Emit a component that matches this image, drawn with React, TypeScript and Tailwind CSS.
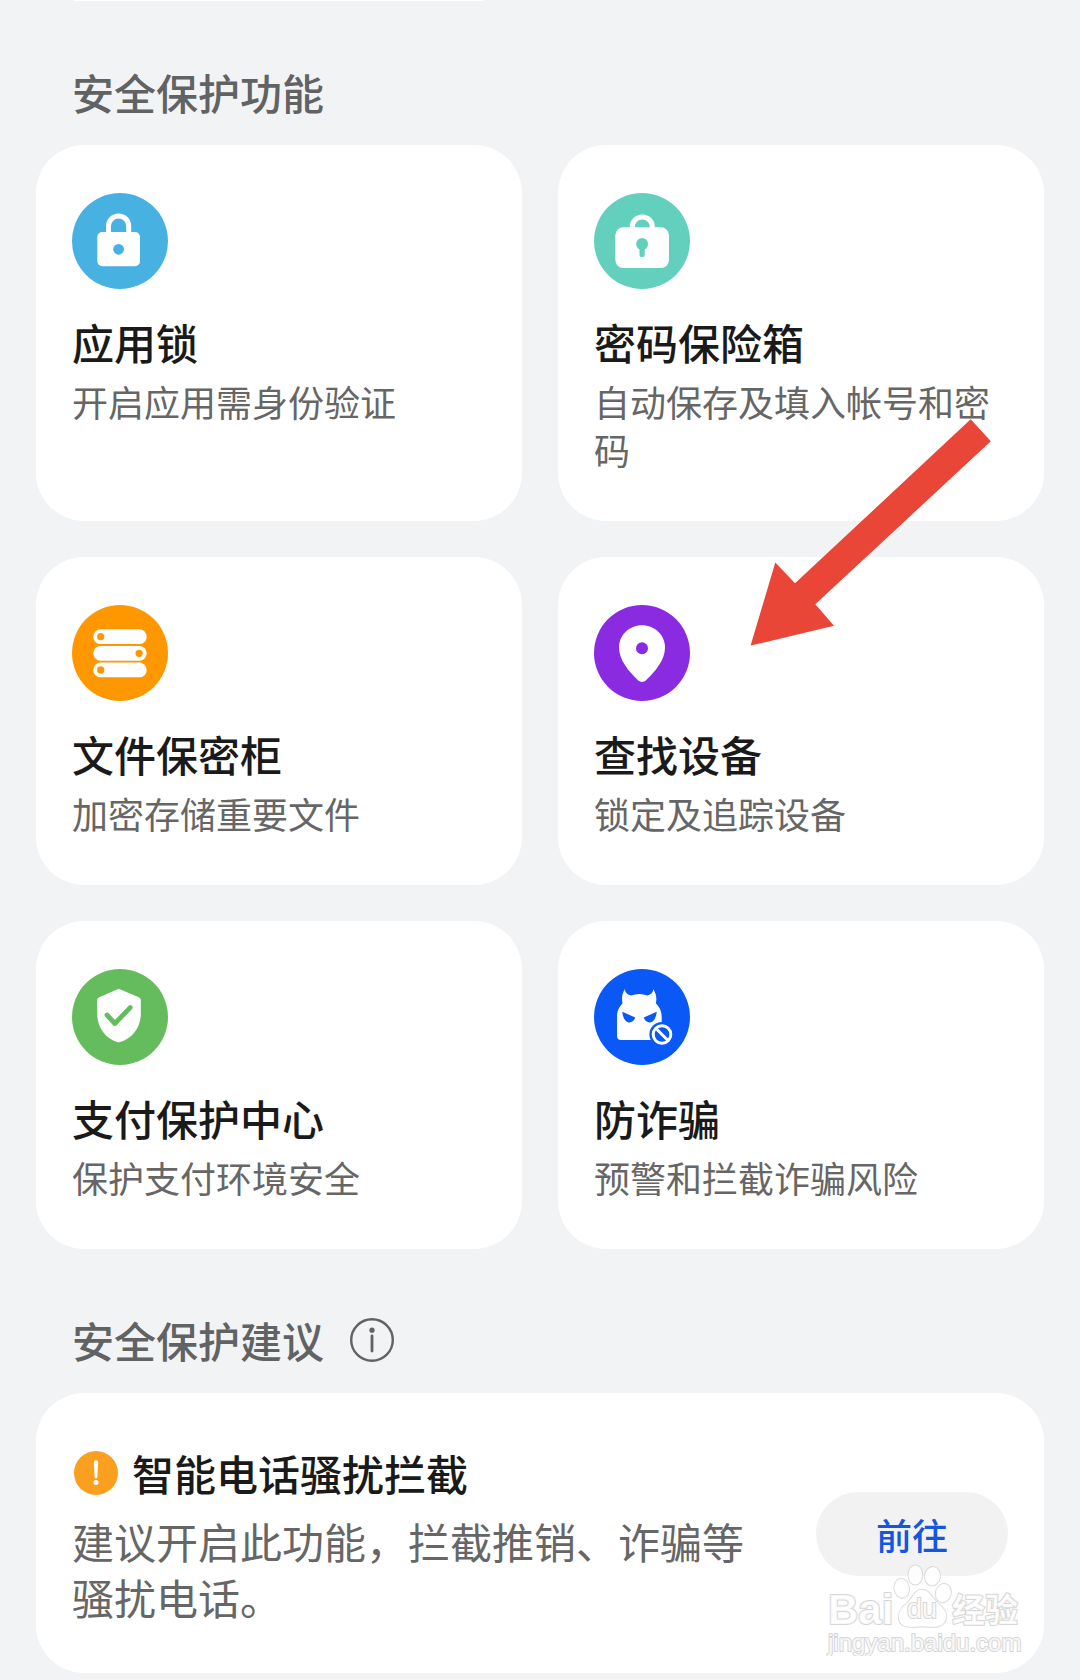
import type { ReactNode } from 'react';

type Feature = {
  title: string;
  desc: string;
  icon: ReactNode;
};

const features: Feature[] = [
  {
    title: '应用锁',
    desc: '开启应用需身份验证',
    icon: (
      <>
        <circle cx="48" cy="48" r="48" fill="#47b1e2" />
        <path d="M36.5 41V33a10.1 10.1 0 0 1 20.2 0V41" fill="none" stroke="#fff" strokeWidth="5" />
        <rect x="25.3" y="39" width="42.7" height="34.3" rx="5" fill="#fff" />
        <circle cx="46.6" cy="56.3" r="5.4" fill="#47b1e2" />
      </>
    ),
  },
  {
    title: '密码保险箱',
    desc: '自动保存及填入帐号和密码',
    icon: (
      <>
        <circle cx="48" cy="48" r="48" fill="#63d0bd" />
        <path d="M38.2 36V34a10.1 10.1 0 0 1 20.2 0V36" fill="none" stroke="#fff" strokeWidth="5" />
        <rect x="21.3" y="34.3" width="53.7" height="40.7" rx="8" fill="#fff" />
        <circle cx="48.1" cy="51" r="6" fill="#63d0bd" />
        <path d="M48.1 51V61.5" stroke="#63d0bd" strokeWidth="5.2" strokeLinecap="round" />
      </>
    ),
  },
  {
    title: '文件保密柜',
    desc: '加密存储重要文件',
    icon: (
      <>
        <circle cx="48" cy="48" r="48" fill="#ff9800" />
        <rect x="21.3" y="24.3" width="53.4" height="14.8" rx="7.4" fill="#fff" />
        <rect x="21.3" y="40.9" width="53.4" height="14.8" rx="7.4" fill="#fff" />
        <rect x="21.3" y="57.5" width="53.4" height="14.8" rx="7.4" fill="#fff" />
        <circle cx="28.7" cy="31.7" r="3.6" fill="#ff9800" />
        <circle cx="67.1" cy="48.3" r="3.6" fill="#ff9800" />
        <circle cx="28.7" cy="64.9" r="3.6" fill="#ff9800" />
      </>
    ),
  },
  {
    title: '查找设备',
    desc: '锁定及追踪设备',
    icon: (
      <>
        <circle cx="48" cy="48" r="48" fill="#8a2be2" />
        <path
          d="M48 20.3C60.7 20.3 71 30 71 42.5C71 55 61.5 66 52 75.3Q48 78.6 44 75.3C34.5 66 25 55 25 42.5C25 30 35.3 20.3 48 20.3Z"
          fill="#fff"
        />
        <circle cx="48" cy="43.3" r="6" fill="#8a2be2" />
      </>
    ),
  },
  {
    title: '支付保护中心',
    desc: '保护支付环境安全',
    icon: (
      <>
        <circle cx="48" cy="48" r="48" fill="#65bc5c" />
        <path
          d="M45 20.5Q46.8 19.6 48.6 20.5L67.3 28.6Q68.8 29.3 68.8 31V45C68.8 58.5 60 69.5 48.4 73Q46.8 73.5 45.2 73C33.8 69.5 25.2 58.5 25.2 45V31Q25.2 29.3 26.7 28.6Z"
          fill="#fff"
        />
        <path
          d="M35 46L42.9 54.5L58.2 38.6"
          fill="none"
          stroke="#65bc5c"
          strokeWidth="4.8"
          strokeLinecap="round"
          strokeLinejoin="round"
        />
      </>
    ),
  },
  {
    title: '防诈骗',
    desc: '预警和拦截诈骗风险',
    icon: (
      <>
        <circle cx="48" cy="48" r="48" fill="#0a59f7" />
        <path
          d="M30.7 20.3C31.5 24 33.5 26 37 26.6Q45.3 23.6 53.4 26.6C56.8 26 58.6 24 59.4 20.3C62.3 25 63 30 61.8 34.2C65.5 38 67.7 42 67.7 48V71H27Q23 71 23 67V48C23 42 25 38 28.6 34.2C27.4 30 28 25 30.7 20.3Z"
          fill="#fff"
        />
        <path d="M28.3 42.7L41.3 48.6C39 55.8 29.5 56 28.3 42.7Z" fill="#0a59f7" />
        <path d="M62.7 42.7L49.7 48.6C52 55.8 61.5 56 62.7 42.7Z" fill="#0a59f7" />
        <circle cx="68" cy="65.5" r="12.6" fill="#0a59f7" />
        <circle cx="68" cy="65.5" r="8.8" fill="none" stroke="#fff" strokeWidth="3" />
        <path d="M62 59.5L74 71.5" stroke="#fff" strokeWidth="3" />
      </>
    ),
  },
];

function FeatureCard({ title, desc, icon }: Feature) {
  return (
    <a href="#" className="block rounded-[48px] bg-white px-9 py-12">
      <svg viewBox="0 0 96 96" className="size-24" aria-hidden="true">
        {icon}
      </svg>
      <h3 className="mt-[23px] text-[42px] leading-[60px] font-medium text-[#1a1a1a]">{title}</h3>
      <p className="mt-[5px] text-[36px] leading-[48px] text-[#666666]">{desc}</p>
    </a>
  );
}

function Arrow() {
  return (
    <svg
      viewBox="0 0 241 227"
      className="pointer-events-none absolute top-[274px] right-[53px] h-[227px] w-[241px]"
      aria-hidden="true"
    >
      <path d="M0.6 226.6L25.3 143.6L45 164.3L220.7 0.3L240.8 22.3L65.3 185.3L84 206.7Z" fill="#e94637" />
    </svg>
  );
}

function Watermark() {
  return (
    <svg
      viewBox="-4 0 204 100"
      className="pointer-events-none absolute right-[52px] bottom-6 h-[100px] w-[204px]"
      fill="#fff"
      fillOpacity="0.85"
      stroke="#d6d6d6"
      strokeWidth="2"
      strokeLinejoin="round"
      paintOrder="stroke"
    >
      <g strokeWidth="1.6">
        <ellipse cx="73.7" cy="32.3" rx="7.4" ry="9.6" transform="rotate(-8 73.7 32.3)" />
        <ellipse cx="87.3" cy="19" rx="7" ry="9.8" />
        <ellipse cx="104.5" cy="20.2" rx="7.6" ry="9.4" transform="rotate(8 104 20)" />
        <ellipse cx="115.3" cy="37" rx="7.6" ry="9.4" transform="rotate(14 115 37)" />
        <path d="M94 33.5C102 34 104 42 110 47C116 52 120 57 118 63C115 73 105 71 94 70.5C84 71 74 73 71 64C69 56 74 51 79 47C85 42 86 34 94 33.5Z" />
      </g>
      <text x="0" y="68" fontSize="42" fontWeight="700" className="font-['Liberation_Sans']">
        Bai
      </text>
      <text x="79" y="62" fontSize="27" className="font-['Liberation_Sans']">
        du
      </text>
      <text x="124" y="66" fontSize="33" fontWeight="700" className="font-['Noto_Sans_CJK_SC']">
        经验
      </text>
      <text x="0" y="95" fontSize="24" className="font-['Liberation_Sans']">
        jingyan.baidu.com
      </text>
    </svg>
  );
}

function App() {
  return (
    <main
      lang="zh-CN"
      className="relative min-h-screen overflow-hidden bg-[#f1f3f5] px-9 pb-[7px] font-['Noto_Sans_CJK_SC',sans-serif]"
    >
      {/* bottom edge of the card scrolled off above */}
      <div className="grid grid-cols-2 gap-9">
        <div className="mx-[38px] h-px bg-white" />
      </div>

      <h2 className="mt-[61px] ml-9 text-[42px] leading-[60px] font-medium text-[#606264]">安全保护功能</h2>
      <section className="relative mt-[23px] grid grid-cols-2 gap-9">
        {features.map((feature) => (
          <FeatureCard key={feature.title} {...feature} />
        ))}
        <Arrow />
      </section>

      <div className="mt-[61px] ml-9 flex items-center gap-[26px]">
        <h2 className="text-[42px] leading-[60px] font-medium text-[#606264]">安全保护建议</h2>
        <button type="button" aria-label="说明">
          <svg viewBox="0 0 44 44" className="size-11" fill="none" stroke="#606264">
            <circle cx="22" cy="22" r="20.8" strokeWidth="2.4" />
            <path d="M22 18V33" strokeWidth="2.8" strokeLinecap="round" />
            <circle cx="22" cy="12.2" r="2.6" fill="#606264" stroke="none" />
          </svg>
        </button>
      </div>
      <section className="mt-[23px] flex items-center justify-between rounded-[48px] bg-white px-9 pt-[50px] pb-12">
        <div className="flex w-[680px] flex-col gap-2.5">
          <div className="flex items-center gap-3.5 pl-0.5">
            <svg viewBox="0 0 44 44" className="size-11" aria-hidden="true">
              <circle cx="22" cy="22" r="22" fill="#faa01e" />
              <path d="M19.8 11.5a2.2 2.2 0 0 1 4.4 0L23.4 26a1.4 1.4 0 0 1-2.8 0Z" fill="#fff" />
              <circle cx="22" cy="31.5" r="2.5" fill="#fff" />
            </svg>
            <h3 className="text-[42px] leading-[60px] font-medium text-[#1a1a1a]">智能电话骚扰拦截</h3>
          </div>
          <p className="text-[42px] leading-[56px] text-[#666666]">建议开启此功能，拦截推销、诈骗等骚扰电话。</p>
        </div>
        <button
          type="button"
          className="h-[84px] w-48 shrink-0 rounded-full bg-[#f2f2f2] text-[36px] leading-[48px] font-medium text-[#1456dc]"
        >
          前往
        </button>
      </section>
      <Watermark />
    </main>
  );
}

export default App;
